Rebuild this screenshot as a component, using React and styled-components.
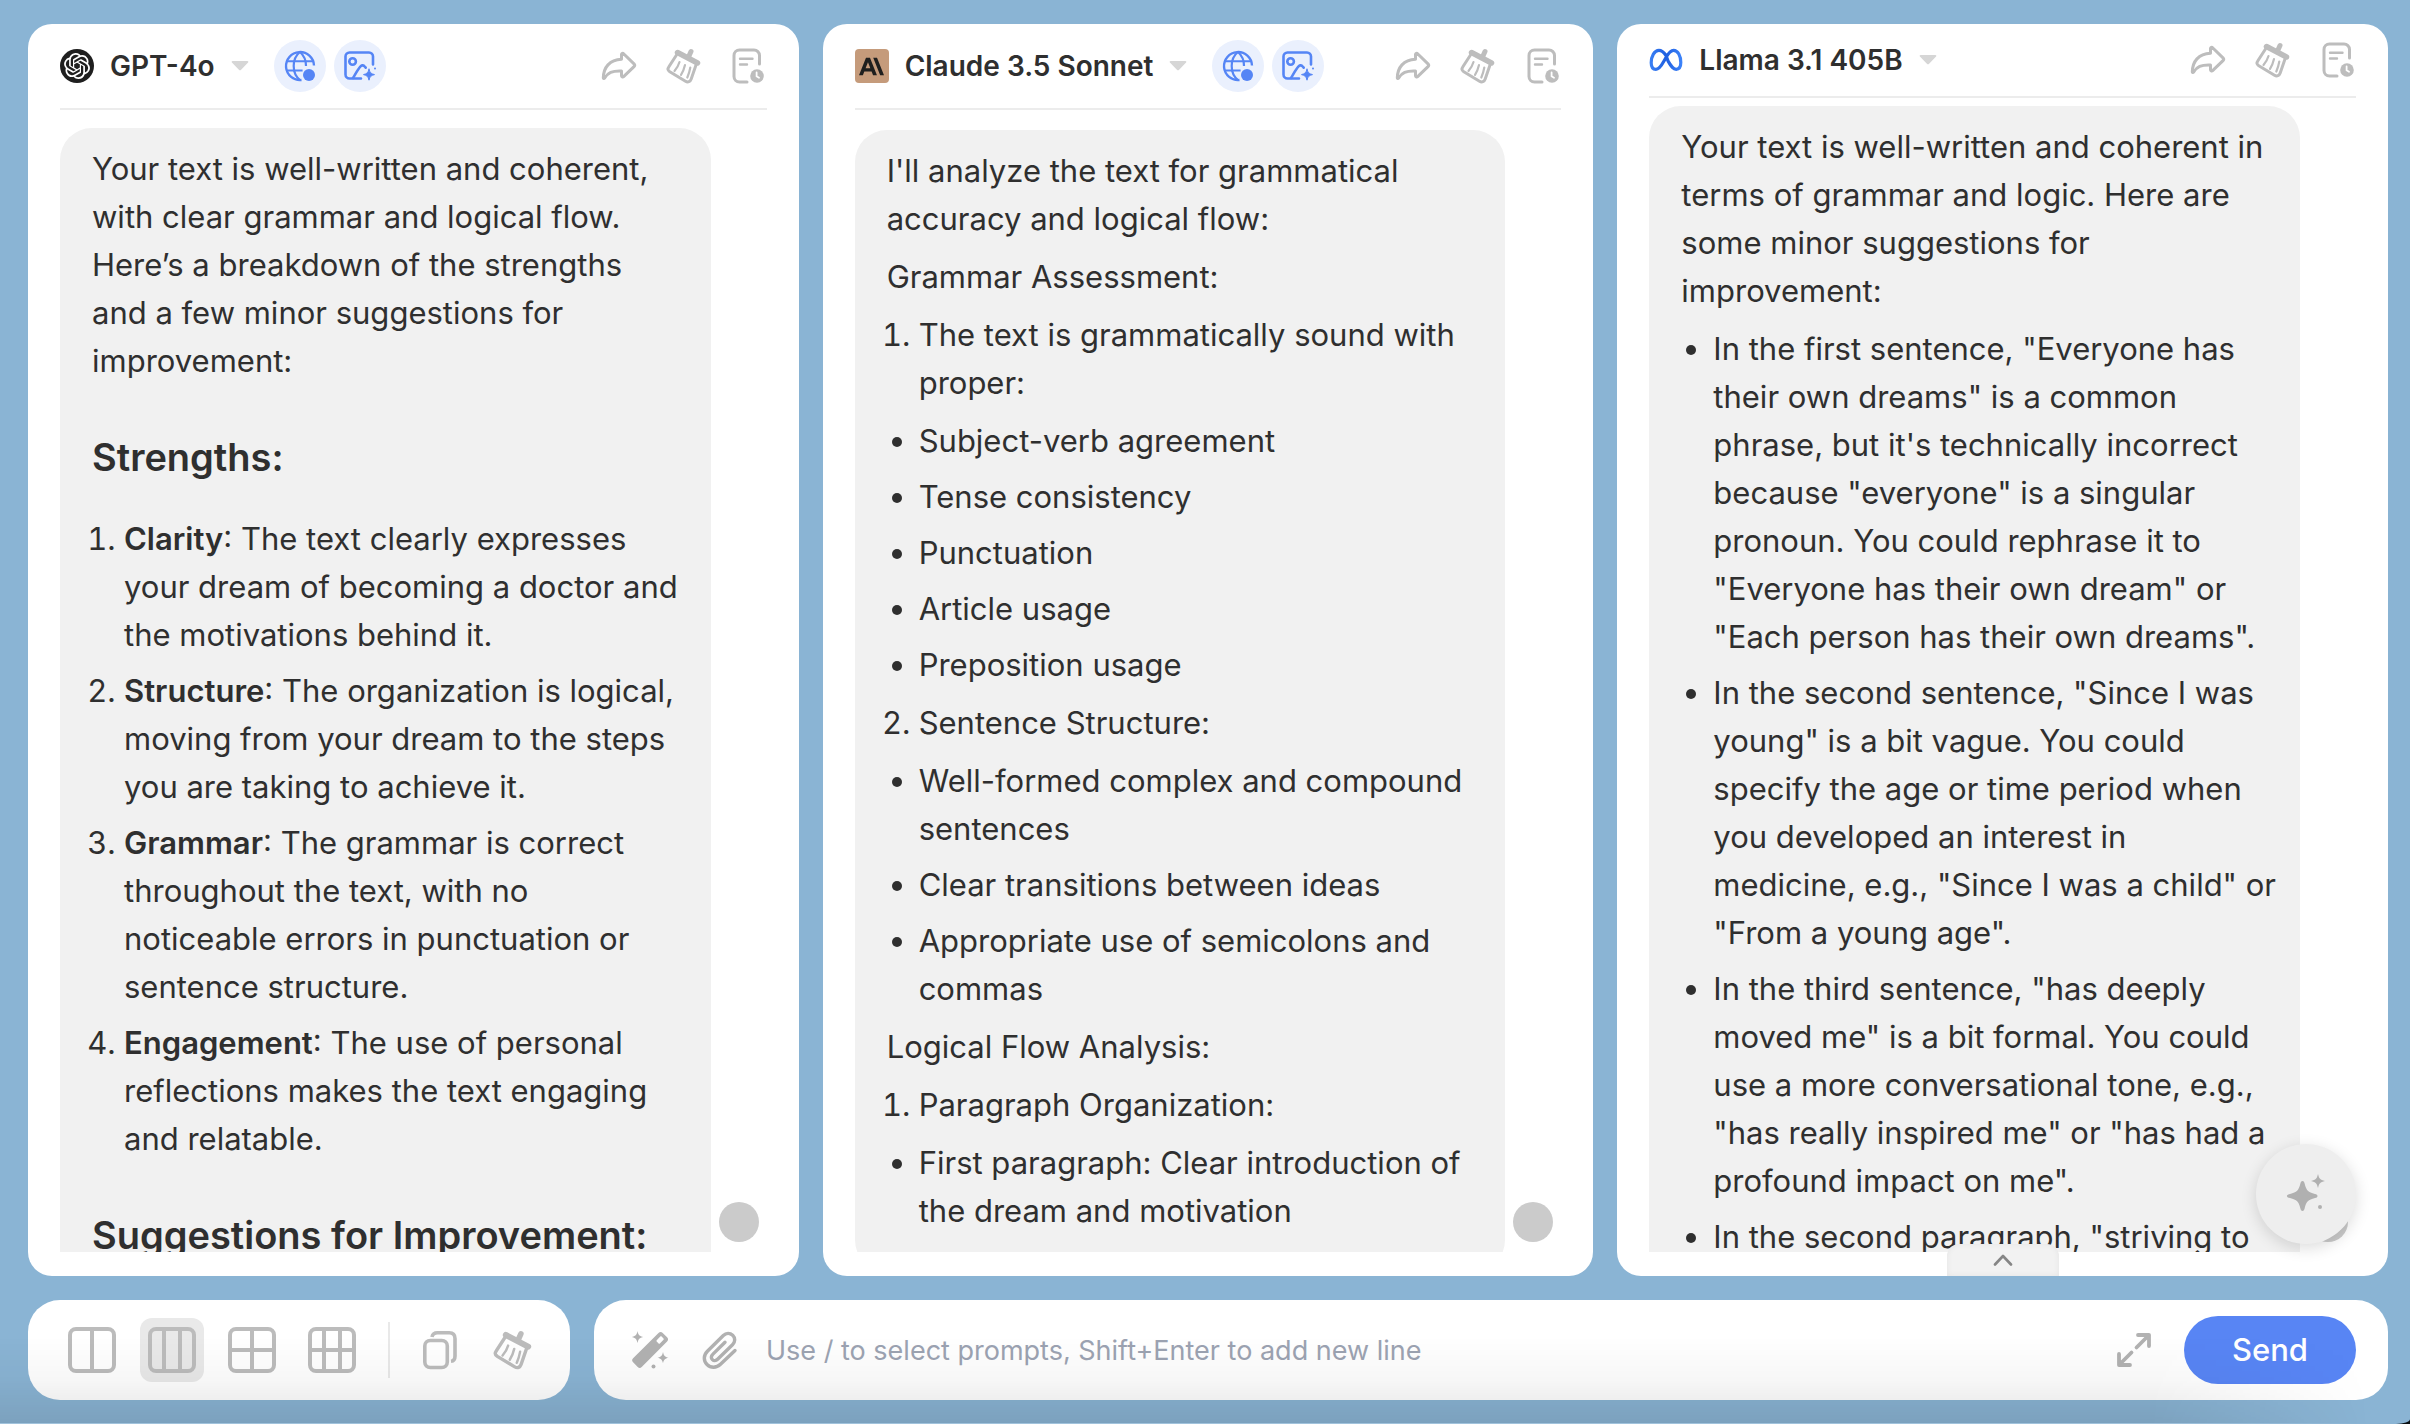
import React from "react";
import styled, { createGlobalStyle, css } from "styled-components";
import { SiOpenai, SiAnthropic } from "react-icons/si";

const GlobalStyle = createGlobalStyle`
  *, *::before, *::after { box-sizing: border-box; }
  html, body { margin: 0; padding: 0; background: #0a0f12; }
  body { font-family: Inter, "Liberation Sans", sans-serif; color: #2f2f2f; }
  button { font: inherit; color: inherit; border: 0; background: none; padding: 0; cursor: pointer; }
`;

const Shell = styled.div`
  position: relative;
  display: flex;
  flex-direction: column;
  gap: 24px;
  height: 100vh;
  padding: 24px 22px 24px 28px;
  background: #8ab4d4;
  border-bottom-right-radius: 14px 5px;
  overflow: hidden;
`;

const BottomShade = styled.div`
  position: absolute;
  left: 0;
  right: 0;
  bottom: 0;
  height: 88px;
  pointer-events: none;
  background: linear-gradient(to bottom, rgba(0, 0, 0, 0), rgba(0, 0, 0, 0.03) 50%, rgba(0, 0, 0, 0.1));
  border-bottom: 1px solid rgba(255, 255, 255, 0.2);
  mask-image: linear-gradient(to right, #000 calc(100% - 260px), transparent calc(100% - 40px));
`;

const Panels = styled.main`
  flex: 1;
  min-height: 0;
  display: grid;
  grid-template-columns: repeat(3, minmax(0, 1fr));
  gap: 24px;
`;

const Panel = styled.section`
  position: relative;
  display: flex;
  flex-direction: column;
  min-height: 0;
  padding: 0 32px 24px;
  background: #fff;
  border-radius: 24px;
  overflow: hidden;
`;

const PanelHeader = styled.header`
  display: flex;
  align-items: center;
  justify-content: space-between;
  padding: 16px 0;
  border-bottom: 2px solid #ececec;
`;

const HeaderGroup = styled.div`
  display: flex;
  align-items: center;
  min-height: 40px;
  gap: ${(p) => p.$gap}px;
`;

const ModelButton = styled.button`
  display: flex;
  align-items: center;
  gap: 16px;
  margin-right: 17px;
  font-size: 28px;
  font-weight: 600;
  line-height: 36px;
`;

const Logo = styled.span`
  display: grid;
  place-items: center;
  width: 34px;
  height: 34px;
  border-radius: ${(p) => p.$radius || 0};
  background: ${(p) => p.$bg || "transparent"};
  color: ${(p) => p.$fg || "inherit"};
`;

const FeatureButton = styled.button`
  display: grid;
  place-items: center;
  width: 52px;
  height: 52px;
  border-radius: 50%;
  background: #eaf0fd;
  color: #5585f5;
`;

const IconButton = styled.button`
  display: grid;
  place-items: center;
  width: 40px;
  height: 40px;
  color: #bdbdbd;
`;

const Scroller = styled.div`
  flex: 1;
  min-height: 0;
  overflow: hidden;
`;

const Bubble = styled.article`
  margin: ${(p) => p.$top}px 56px 0 0;
  padding: 17px 32px;
  min-height: 100%;
  background: #f1f1f1;
  border-radius: 32px;
  font-size: 31px;
  line-height: 48px;
  white-space: nowrap;

  p { margin: 0 0 10px; }
  h3 { margin: 46px 0 32px; font-size: 38px; line-height: 52px; font-weight: 600; }
  ol, ul { margin: 10px 0; padding-left: 32px; }
  li + li { margin-top: 8px; }
  strong { font-weight: 600; }
`;

const ScrollDot = styled.button`
  position: absolute;
  right: 40px;
  bottom: 34px;
  width: 40px;
  height: 40px;
  border-radius: 50%;
  background: #cbcbcb;
`;

const Fab = styled.button`
  position: absolute;
  right: 32px;
  bottom: 32px;
  display: grid;
  place-items: center;
  width: 100px;
  height: 100px;
  border-radius: 50%;
  background: #eeeeee;
  color: #b0b0b0;
  box-shadow: 0 4px 16px rgba(0, 0, 0, 0.14);
`;

const DrawerTab = styled.button`
  position: absolute;
  left: 50%;
  bottom: 0;
  transform: translateX(-50%);
  display: grid;
  place-items: center;
  width: 112px;
  height: 32px;
  border-radius: 12px 12px 0 0;
  background: #f2f2f2;
  color: #858585;
  box-shadow: inset 0 0 6px rgba(0, 0, 0, 0.06);
`;

const BottomRow = styled.footer`
  display: flex;
  gap: 24px;
  height: 100px;
`;

const bar = css`
  display: flex;
  align-items: center;
  background: #fff;
  border-radius: 32px;
`;

const Toolbar = styled.div`
  ${bar}
  padding: 0 30px 0 32px;
  gap: 16px;
`;

const LayoutButton = styled.button`
  display: grid;
  place-items: center;
  width: 64px;
  height: 64px;
  border-radius: 12px;
  background: ${(p) => (p.$active ? "#e9e9e9" : "transparent")};
  color: #bcbcbc;
`;

const Divider = styled.span`
  width: 2px;
  height: 56px;
  margin: 0 6px 0 8px;
  background: #e9e9e9;
`;

const ToolButton = styled.button`
  display: grid;
  place-items: center;
  width: 56px;
  height: 56px;
  color: #bcbcbc;
`;

const Composer = styled.form`
  ${bar}
  flex: 1;
  min-width: 0;
  padding: 0 32px 0 36px;
`;

const ComposerIcon = styled.button`
  display: grid;
  place-items: center;
  width: 40px;
  height: 40px;
  color: #b2b2b2;
  margin-right: ${(p) => p.$after}px;
`;

const PromptInput = styled.input`
  flex: 1;
  min-width: 0;
  height: 56px;
  padding: 0;
  border: 0;
  outline: 0;
  background: transparent;
  font: 400 27px/40px Inter, "Liberation Sans", sans-serif;
  color: #2f2f2f;
  &::placeholder { color: #9ca3b2; opacity: 1; }
`;

const SendButton = styled.button`
  width: 172px;
  height: 68px;
  border-radius: 34px;
  background: #5885f4;
  color: #fff;
  font-size: 31px;
  line-height: 40px;
  font-weight: 500;
`;

const Caret = () => (
  <svg width="18" height="12" viewBox="0 0 18 12" aria-hidden="true">
    <path d="M1.6 1h14.8c.9 0 1.2.8.7 1.4l-7 7.3c-.6.7-1.6.7-2.2 0l-7-7.3C.4 1.8.7 1 1.6 1z" fill="#d6d6d6" />
  </svg>
);

const GlobeIcon = () => (
  <svg width="32" height="32" viewBox="0 0 32 32" fill="none" stroke="currentColor" strokeWidth="2.4" aria-hidden="true">
    <path d="M30 15.5A14 14 0 1 0 17.5 30" />
    <path d="M2.6 11.3h26.6M2.6 20.6h16" strokeWidth="2" />
    <path d="M16 2c-8.4 6.5-8.4 21.5 0 28M16 2c4 3.5 6 8.5 6 14" strokeWidth="2.2" />
    <circle cx="25" cy="25" r="6" fill="currentColor" stroke="none" />
  </svg>
);

const PictureIcon = () => (
  <svg width="32" height="32" viewBox="0 0 32 32" fill="none" stroke="currentColor" strokeWidth="2.6" strokeLinecap="round" strokeLinejoin="round" aria-hidden="true">
    <path d="M29 14.500V6.500a4 4 0 0 0-4-4H5.500a4 4 0 0 0-4 4v18a4 4 0 0 0 4 4H17" />
    <circle cx="8.600" cy="11.500" r="3.300" />
    <path d="M9 28c2.500-4 4.600-8.500 7.800-11.800 1.200-1.200 2.900-1 3.900.3l1 1.200" />
    <path d="M25 19.200c.8 3.400 1.900 4.500 5.500 5.400-3.600.9-4.700 2-5.500 5.600-.8-3.600-1.900-4.700-5.500-5.600 3.600-.9 4.700-2 5.500-5.400z" fill="currentColor" strokeWidth="1" />
    <circle cx="31" cy="18.500" r="1" fill="currentColor" stroke="none" />
  </svg>
);

const ShareIcon = () => (
  <svg width="36" height="30" viewBox="0 0 36 30" fill="none" stroke="currentColor" strokeWidth="3" strokeLinejoin="round" strokeLinecap="round" aria-hidden="true">
    <path d="M20.5 8.3V3.6c0-1.200 1.300-1.700 2.100-.9L33 12.900c.8.800.8 1.900 0 2.700L22.600 25.600c-.8.800-2.100.2-2.100-.9V20c-9.500-.4-13.700 1.800-17 7.200-.4.600-1.200.4-1.200-.3C2.500 16.500 8.500 8.800 20.500 8.300z" />
  </svg>
);

const BroomIcon = ({ size = 36 }) => (
  <svg width={size} height={size} viewBox="0 0 36 36" fill="none" stroke="currentColor" strokeLinecap="round" strokeLinejoin="round" aria-hidden="true">
    <path d="M12.5 4.500 32.500 15" strokeWidth="5.500" />
    <path d="M23.500 9 26 3.500" strokeWidth="5" />
    <path d="M11.500 7 4.200 18.200c-1.700 2.600-2 3.700.6 5.500l15.700 9.500c2.500 1.500 4.700.5 5.700-2.300L31 17" strokeWidth="3" />
    <path d="M14.500 14c-1 3.500-2.600 6.200-5 9M20 17c-.8 3.500-2 6.800-4 9.800M25.300 19.500c-.6 3.500-1.500 6.600-3 10" strokeWidth="2.200" />
  </svg>
);

const HistoryIcon = () => (
  <svg width="37" height="36" viewBox="-3 0 37 36" fill="none" stroke="currentColor" strokeWidth="3" strokeLinecap="round" aria-hidden="true">
    <path d="M28.500 16V7.500a5.500 5.500 0 0 0-5.500-5.500H8.500A5.500 5.500 0 0 0 3 7.500v21A5.500 5.500 0 0 0 8.500 34H16" />
    <path d="M9 10.800h12.500M9 16.500h7" strokeWidth="2.400" />
    <circle cx="26" cy="28" r="6.800" fill="currentColor" stroke="none" />
    <path d="M25.600 24.500v3.800l2.400 1.400" stroke="#fff" strokeWidth="1.800" />
  </svg>
);

const GridIcon = ({ cols, split }) => (
  <svg width="48" height="48" viewBox="0 0 48 48" fill="none" stroke="currentColor" strokeWidth="4" aria-hidden="true">
    <rect x="2" y="3" width="44" height="42" rx="6" />
    <path d={cols === 2 ? "M24 3v42" : "M16 3v42M32 3v42"} />
    {split && <path d="M2 24h44" />}
  </svg>
);

const CopyIcon = () => (
  <svg width="36" height="40" viewBox="0 0 36 40" fill="none" stroke="currentColor" strokeWidth="3.600" aria-hidden="true">
    <rect x="2.800" y="10.500" width="22.500" height="27" rx="5.500" />
    <path d="M10 7c.5-3 2.500-4.200 5.500-4.200h11.700c3.700 0 5.800 2.100 5.800 5.800V26c0 3-1.200 5-4 5.300" />
  </svg>
);

const WandIcon = () => (
  <svg width="38" height="38" viewBox="0 0 38 38" fill="currentColor" aria-hidden="true">
    <path fillRule="evenodd" d="M27.500 1.900c1.300-1.300 2.900-1.300 4.200 0l4.400 4.400c1.300 1.300 1.300 2.900 0 4.200L10.700 35.900c-1.300 1.300-2.700 1.300-4 0l-4.600-4.600c-1.300-1.300-1.300-2.700 0-4zM29.300 5.600l-3.600 3.600c-.4.400-.4.900 0 1.300l1.900 1.900c.4.400.9.400 1.300 0l3.600-3.600c.4-.4.400-.9 0-1.300l-1.900-1.900c-.4-.4-.9-.4-1.300 0z" />
    <path d="M6.500 0c.8 4.200 2 5.200 6 6-4 .8-5.200 2-6 6-.8-4-2-5.200-6-6 4-.8 5.200-1.800 6-6zM32 21c.8 3.800 1.800 4.900 5.500 5.700-3.700.8-4.700 1.900-5.500 5.600-.8-3.700-1.800-4.800-5.500-5.600 3.700-.8 4.700-1.900 5.500-5.700z" />
    <circle cx="22.500" cy="35.500" r="2" />
  </svg>
);

const ClipIcon = () => (
  <svg width="38" height="38" viewBox="0 0 38 38" fill="none" stroke="currentColor" strokeWidth="3.400" strokeLinecap="round" strokeLinejoin="round" aria-hidden="true">
    <path d="M34 19.500 19.500 33.300c-4.200 4-9.800 3.800-13.500.2-3.700-3.700-3.600-9.300.4-13.300L22.300 4.500c2.800-2.800 6.700-2.800 9.400-.2 2.700 2.700 2.700 6.600-.2 9.400L16.600 28.300c-1.700 1.700-3.800 1.700-5.200.3-1.500-1.500-1.400-3.600.3-5.200L24 11.200" />
  </svg>
);

const ExpandIcon = () => (
  <svg width="36" height="36" viewBox="0 0 36 36" fill="none" stroke="currentColor" strokeWidth="3.800" strokeLinecap="round" strokeLinejoin="round" aria-hidden="true">
    <path d="M22 3h11v11M33 3 20.500 15.500M14 33H3V22M3 33 15.500 20.500" />
  </svg>
);

const SparkIcon = () => (
  <svg width="40" height="40" viewBox="0 0 40 40" fill="currentColor" aria-hidden="true">
    <path d="M16.500 7c1.300 0 1.700 1 2.100 2.500 1.800 7 3.400 8.600 10.400 10.400 1.500.4 2.500.8 2.500 2.100s-1 1.700-2.500 2.100c-7 1.800-8.600 3.400-10.400 10.400-.4 1.500-.8 2.500-2.100 2.500s-1.700-1-2.100-2.500c-1.800-7-3.400-8.600-10.400-10.400C2.500 23.700.900 23.300.900 22s1.600-1.700 3.100-2.100c7-1.800 8.600-3.400 10.400-10.400.4-1.500.8-2.500 2.100-2.500z" />
    <path d="M32 0c1.200 4.800 2 5.600 7 7-5 1.400-5.800 2.200-7 7-1.200-4.800-2-5.600-7-7 5-1.400 5.800-2.200 7-7z" />
    <circle cx="34" cy="33" r="2" />
  </svg>
);

const MetaLogo = () => (
  <svg width="34" height="24" viewBox="0 0 34 24" fill="none" strokeWidth="3.200" aria-hidden="true">
    <defs>
      <linearGradient id="metaBlue" x1="0" y1="0" x2="34" y2="0" gradientUnits="userSpaceOnUse">
        <stop offset="0" stopColor="#3b82f6" />
        <stop offset="0.5" stopColor="#1f5fe0" />
        <stop offset="1" stopColor="#3f86fb" />
      </linearGradient>
    </defs>
    <path stroke="url(#metaBlue)" d="M17 7.500C14.800 4.200 12.500 2.300 9.900 2.300 5.400 2.300 2.200 8.400 2.200 14.700c0 4.100 1.700 6.600 4.700 6.600 2.900 0 4.800-2.300 8.100-8.300L17 9.500c2.600-4.600 4.600-7.200 7.600-7.200 4.400 0 7.200 5.800 7.200 12.300 0 4.200-1.700 6.700-4.600 6.700s-4.700-2.300-8.100-8.200z" />
  </svg>
);

const ChevronUp = () => (
  <svg width="20" height="12" viewBox="0 0 20 12" fill="none" stroke="currentColor" strokeWidth="2.600" strokeLinecap="round" strokeLinejoin="round" aria-hidden="true">
    <path d="M2 10.500 10 2l8 8.500" />
  </svg>
);

function ChatPanel({ name, logo, tools, top, children, extra }) {
  return (
    <Panel aria-label={name}>
      <PanelHeader>
        <HeaderGroup $gap={8}>
          <ModelButton type="button">
            {logo}
            {name}
            <Caret />
          </ModelButton>
          {tools && (
            <>
              <FeatureButton type="button" aria-label="Web access"><GlobeIcon /></FeatureButton>
              <FeatureButton type="button" aria-label="Image generation"><PictureIcon /></FeatureButton>
            </>
          )}
        </HeaderGroup>
        <HeaderGroup $gap={24}>
          <IconButton type="button" aria-label="Share"><ShareIcon /></IconButton>
          <IconButton type="button" aria-label="Clear chat"><BroomIcon /></IconButton>
          <IconButton type="button" aria-label="History"><HistoryIcon /></IconButton>
        </HeaderGroup>
      </PanelHeader>
      <Scroller>
        <Bubble $top={top}>{children}</Bubble>
      </Scroller>
      <ScrollDot type="button" aria-label="Scroll to bottom" />
      {extra}
    </Panel>
  );
}

const Lines = ({ of }) =>
  of.map((line, i) => (
    <React.Fragment key={line}>
      {i > 0 && <br />}
      {line}
    </React.Fragment>
  ));

const strengths = [
  ["Clarity", [": The text clearly expresses", "your dream of becoming a doctor and", "the motivations behind it."]],
  ["Structure", [": The organization is logical,", "moving from your dream to the steps", "you are taking to achieve it."]],
  ["Grammar", [": The grammar is correct", "throughout the text, with no", "noticeable errors in punctuation or", "sentence structure."]],
  ["Engagement", [": The use of personal", "reflections makes the text engaging", "and relatable."]],
];

const llamaNotes = [
  ["In the first sentence, \"Everyone has", "their own dreams\" is a common", "phrase, but it's technically incorrect", "because \"everyone\" is a singular", "pronoun. You could rephrase it to", "\"Everyone has their own dream\" or", "\"Each person has their own dreams\"."],
  ["In the second sentence, \"Since I was", "young\" is a bit vague. You could", "specify the age or time period when", "you developed an interest in", "medicine, e.g., \"Since I was a child\" or", "\"From a young age\"."],
  ["In the third sentence, \"has deeply", "moved me\" is a bit formal. You could", "use a more conversational tone, e.g.,", "\"has really inspired me\" or \"has had a", "profound impact on me\"."],
  ["In the second paragraph, \"striving to"],
];

export default function App() {
  return (
    <>
      <GlobalStyle />
      <Shell>
        <Panels>
          <ChatPanel
            name="GPT-4o"
            tools
            top={18}
            logo={<Logo $bg="#1f1f1f" $fg="#fff" $radius="50%"><SiOpenai size={26} /></Logo>}
          >
            <p>
              <Lines of={["Your text is well-written and coherent,", "with clear grammar and logical flow.", "Here’s a breakdown of the strengths", "and a few minor suggestions for", "improvement:"]} />
            </p>
            <h3>Strengths:</h3>
            <ol>
              {strengths.map(([title, lines]) => (
                <li key={title}><strong>{title}</strong><Lines of={lines} /></li>
              ))}
            </ol>
            <h3>Suggestions for Improvement:</h3>
          </ChatPanel>

          <ChatPanel
            name="Claude 3.5 Sonnet"
            tools
            top={20}
            logo={<Logo $bg="#c59b7b" $fg="#1f1f1e" $radius="4px"><SiAnthropic size={25} /></Logo>}
          >
            <p><Lines of={["I'll analyze the text for grammatical", "accuracy and logical flow:"]} /></p>
            <p>Grammar Assessment:</p>
            <ol><li><Lines of={["The text is grammatically sound with", "proper:"]} /></li></ol>
            <ul>
              <li>Subject-verb agreement</li>
              <li>Tense consistency</li>
              <li>Punctuation</li>
              <li>Article usage</li>
              <li>Preposition usage</li>
            </ul>
            <ol start={2}><li>Sentence Structure:</li></ol>
            <ul>
              <li><Lines of={["Well-formed complex and compound", "sentences"]} /></li>
              <li>Clear transitions between ideas</li>
              <li><Lines of={["Appropriate use of semicolons and", "commas"]} /></li>
            </ul>
            <p>Logical Flow Analysis:</p>
            <ol><li>Paragraph Organization:</li></ol>
            <ul><li><Lines of={["First paragraph: Clear introduction of", "the dream and motivation"]} /></li></ul>
          </ChatPanel>

          <ChatPanel
            name="Llama 3.1 405B"
            top={8}
            logo={<Logo><MetaLogo /></Logo>}
            extra={
              <>
                <Fab type="button" aria-label="Assistant"><SparkIcon /></Fab>
                <DrawerTab type="button" aria-label="Show more"><ChevronUp /></DrawerTab>
              </>
            }
          >
            <p><Lines of={["Your text is well-written and coherent in", "terms of grammar and logic. Here are", "some minor suggestions for", "improvement:"]} /></p>
            <ul>
              {llamaNotes.map((lines) => <li key={lines[0]}><Lines of={lines} /></li>)}
            </ul>
          </ChatPanel>
        </Panels>

        <BottomRow>
          <Toolbar role="toolbar" aria-label="Layout">
            <LayoutButton type="button" aria-label="Two columns"><GridIcon cols={2} /></LayoutButton>
            <LayoutButton type="button" aria-label="Three columns" aria-pressed="true" $active><GridIcon cols={3} /></LayoutButton>
            <LayoutButton type="button" aria-label="Four panes"><GridIcon cols={2} split /></LayoutButton>
            <LayoutButton type="button" aria-label="Six panes"><GridIcon cols={3} split /></LayoutButton>
            <Divider />
            <ToolButton type="button" aria-label="Copy all"><CopyIcon /></ToolButton>
            <ToolButton type="button" aria-label="Clear all"><BroomIcon size={40} /></ToolButton>
          </Toolbar>
          <Composer onSubmit={(e) => e.preventDefault()}>
            <ComposerIcon type="button" aria-label="Prompt tools" $after={30}><WandIcon /></ComposerIcon>
            <ComposerIcon type="button" aria-label="Attach file" $after={26}><ClipIcon /></ComposerIcon>
            <PromptInput aria-label="Message" placeholder="Use / to select prompts, Shift+Enter to add new line" />
            <ComposerIcon type="button" aria-label="Expand" $after={30}><ExpandIcon /></ComposerIcon>
            <SendButton type="submit">Send</SendButton>
          </Composer>
        </BottomRow>
        <BottomShade />
      </Shell>
    </>
  );
}
